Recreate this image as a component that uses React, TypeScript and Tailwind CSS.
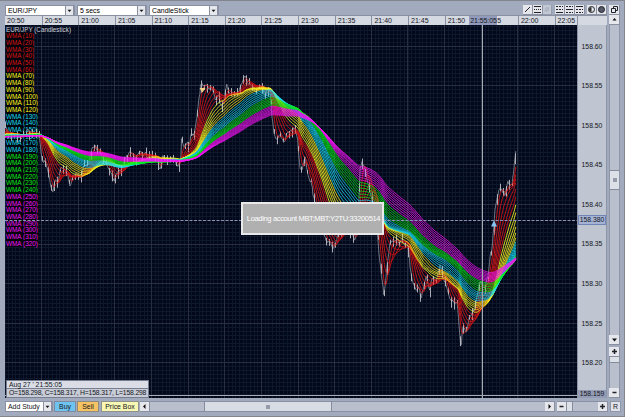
import type { ReactNode } from 'react';
import clsx from 'clsx';

type Point = [number, number];

const BAR = 0.611;
const WARMUP = 340;
const LEFT = 5;
const RIGHT = 517;

// close price in plot coordinates, one entry per swing
const swings: Point[] = [
  [-200, 142], [-120, 139], [-60, 138], [-20, 137], [-5, 134], [5, 128], [8, 133], [12, 135], [18, 135], [22, 139],
  [26, 132], [32, 133], [38, 132], [40, 138], [42, 159], [46, 163], [48, 170], [51, 188], [53, 193], [55, 182],
  [58, 185], [61, 168], [65, 170], [68, 175], [70, 187], [73, 172], [77, 175], [80, 177], [84, 166], [88, 164],
  [90, 156], [92, 148], [95, 144], [98, 152], [101, 153], [105, 160], [108, 165], [112, 173], [115, 180], [118, 172],
  [122, 166], [126, 159], [130, 149], [132, 152], [136, 158], [140, 154], [145, 156], [150, 154], [155, 160],
  [160, 167], [163, 155], [168, 163], [172, 158], [176, 164], [179, 168], [181, 158], [181.5, 140], [184, 150],
  [187, 144], [190, 142], [191, 130], [194, 135], [197, 115], [199, 95], [201, 87], [204, 86], [208, 85],
  [212, 90], [215, 101], [218, 98], [222, 104], [225, 96], [227, 85], [230, 92], [235, 91], [240, 89], [243, 80],
  [245, 75], [248, 83], [252, 88], [257, 90], [261, 87], [265, 93], [270, 93], [272, 118], [274, 132], [276, 138],
  [280, 136], [284, 140], [288, 133], [292, 130], [295, 130], [298, 145], [300, 166], [302, 168], [305, 156],
  [307, 172], [310, 181], [314, 195], [318, 215], [322, 222], [326, 243], [330, 240], [333, 247], [338, 235],
  [345, 222], [352, 235], [355, 242], [358, 225], [360, 168], [362, 162], [365, 172], [370, 190], [374, 205],
  [377, 230], [379, 255], [381, 273], [384, 293], [387, 266], [390, 242], [395, 243], [400, 240], [405, 242],
  [409, 250], [410, 266], [413, 282], [416, 290], [419, 290], [421, 299], [424, 285], [426, 275], [430, 288],
  [433, 275], [436, 280], [440, 264], [443, 275], [447, 288], [450, 298], [454, 303], [457, 300], [459, 325],
  [461, 346], [463, 328], [466, 335], [469, 317], [473, 313], [478, 292], [480, 279], [483, 290], [488, 280],
  [490, 260], [492, 246], [494, 222], [495, 206], [498, 192], [502, 187], [505, 197], [508, 182], [512, 184],
  [515, 155], [517, 146],
];

function priceAt(x: number) {
  for (let i = 1; i < swings.length; i++) {
    if (x <= swings[i][0]) {
      const [x0, y0] = swings[i - 1];
      const [x1, y1] = swings[i];
      return y0 + ((y1 - y0) * (x - x0)) / (x1 - x0);
    }
  }
  return swings[swings.length - 1][1];
}

function noise(i: number) {
  const v = Math.sin(i * 127.1 + 11.7) * 43758.5453;
  return v - Math.floor(v) - 0.5;
}

const count = WARMUP + Math.floor((RIGHT - LEFT) / BAR);
const closes = Array.from(
  { length: count },
  (_, i) => priceAt(LEFT + (i - WARMUP) * BAR) + noise(i) + noise(Math.floor(i / 4) + 4000) * 6
);

function wma(period: number) {
  const weight = (period * (period + 1)) / 2;
  const out: string[] = [];
  for (let i = WARMUP; i < count; i++) {
    let sum = 0;
    for (let k = 0; k < period; k++) sum += closes[i - k] * (period - k);
    out.push(`${(LEFT + (i - WARMUP) * BAR).toFixed(1)},${(sum / weight).toFixed(1)}`);
  }
  return out.join(' ');
}

function colorFor(period: number) {
  if (period <= 60) return '#dc1414';
  if (period <= 120) return '#fff81c';
  if (period <= 180) return '#18dcee';
  if (period <= 240) return '#08ee18';
  return '#f414f4';
}

const averages = Array.from({ length: 32 }, (_, i) => {
  const period = (i + 1) * 10;
  return { period, color: colorFor(period), points: wma(period) };
});

const candles = closes
  .slice(WARMUP)
  .map((y, i) => {
    if (i % 5 !== 0) return '';
    const x = Math.round(LEFT + i * BAR) + 0.5;
    const up = 1 + Math.abs(noise(i + 900)) * 10;
    const down = 1 + Math.abs(noise(i + 2500)) * 13;
    return `M${x} ${(y - up).toFixed(1)}V${(y + down).toFixed(1)}`;
  })
  .join('');

const closeLine = closes.slice(WARMUP).map((y, i) => `${(LEFT + i * BAR).toFixed(1)},${y.toFixed(1)}`).join(' ');

const times = ['20:50', '20:55', '21:00', '21:05', '21:10', '21:15', '21:20', '21:25', '21:30', '21:35', '21:40', '21:45', '21:50', '21:55', '22:00', '22:05'];
const prices = ['158.60', '158.55', '158.50', '158.45', '158.40', '158.35', '158.30', '158.25', '158.20'];

const timeX = (i: number) => 4.8 + i * 36.65;
const priceY = (i: number) => 46 + i * 39.6;

function Chart() {
  return (
    <svg className="block h-[373px] w-[572px] shrink-0 bg-[#020719]" viewBox="5 25 572 373">
      <g stroke="#0e182c" strokeWidth="1" shapeRendering="crispEdges">
        {Array.from({ length: 156 }, (_, i) => (
          <path key={i} d={`M${5 + i * 3.665} 25V398`} />
        ))}
        {Array.from({ length: 94 }, (_, i) => (
          <path key={i} d={`M5 ${26.2 + i * 3.96}H577`} />
        ))}
      </g>
      <g stroke="#272f43" strokeWidth="1" shapeRendering="crispEdges">
        {times.map((t, i) => (
          <path key={t} d={`M${timeX(i)} 25V398`} />
        ))}
        {prices.map((p, i) => (
          <path key={p} d={`M5 ${priceY(i)}H577`} />
        ))}
      </g>

      <g fontFamily="Liberation Sans, Arial, sans-serif" fontSize="6.8">
        <text x="6" y="31.5" fill="#d0d3dc" textLength="65" lengthAdjust="spacingAndGlyphs">EUR/JPY (Candlestick)</text>
        {averages.map(({ period, color }, i) => (
          <g key={period}>
            <rect x="6" y={32.6 + i * 6.69} width={period < 100 ? 28 : 32} height="6.7" fill="#02040c" />
            <text
              x="6"
              y={38.3 + i * 6.69}
              fill={color}
              textLength={period < 100 ? 28 : 32}
              lengthAdjust="spacingAndGlyphs"
            >
              {`WMA (${period})`}
            </text>
          </g>
        ))}
      </g>

      <path d={candles} stroke="#b4b6bd" strokeWidth="0.9" />
      <polyline points={closeLine} fill="none" stroke="#b9bbc3" strokeWidth="0.6" />
      <g fill="none" strokeWidth="0.85">
        {averages.map(({ period, color, points }) => (
          <polyline key={period} points={points} stroke={color} />
        ))}
      </g>
      <path d={candles} stroke="#d0d0d4" strokeWidth="0.8" opacity="0.25" />
      <path d="M199.5 88H205.5L202.5 92.5Z" fill="#f3d284" />
      <path d="M491 226.5H497L494 220.5Z" fill="#83c6f4" />

      <path d="M5 220.5H577" stroke="#8b91b4" strokeDasharray="3 1.5" />
      <path d="M482.5 25V398M5 395.5H577" stroke="#a9abb4" />
    </svg>
  );
}

function IconButton({ children, className }: { children: ReactNode; className?: string }) {
  return (
    <span
      className={clsx(
        'flex h-[10px] shrink-0 items-center justify-center border-r border-b border-[#8b90a1] bg-[#e5e7ed]',
        className ?? 'w-[10px]'
      )}
    >
      <svg className="h-[9px] w-[9px]" viewBox="0 0 9 9" fill="none" stroke="#20222a">
        {children}
      </svg>
    </span>
  );
}

const arrows = {
  up: 'M2.5 5.5H6.5L4.5 3Z',
  down: 'M2 3.5H7L4.5 6.5Z',
  left: 'M5.5 2V7L3 4.5Z',
  right: 'M3.5 2V7L6 4.5Z',
};

function Arrow({ dir, className }: { dir: keyof typeof arrows; className?: string }) {
  return (
    <IconButton className={className}>
      <path d={arrows[dir]} fill="#111" stroke="none" />
    </IconButton>
  );
}

function Select({ label }: { label: string }) {
  return (
    <div className="flex h-[11px] w-[70px] border border-[#8a90a3] bg-white">
      <span className="flex-1 pl-[2px] text-[6.9px] leading-[9px]">{label}</span>
      <Arrow dir="down" className="w-[9px] border-l" />
    </div>
  );
}

function Toolbar() {
  return (
    <div className="flex h-[12px] shrink-0 items-center pr-[4px] pl-[5px]">
      <div className="flex gap-[2px]">
        <Select label="EUR/JPY" />
        <Select label="5 secs" />
        <Select label="CandleStick" />
      </div>
      <div className="ml-auto flex gap-[2px]">
        <div className="flex">
          <IconButton><path d="M2 7L7 2" /></IconButton>
          <IconButton><path d="M1 1.5H8M1 7.5H8" /><path d="M1 4.5H8" strokeDasharray="1 1" /></IconButton>
          <IconButton className="w-[9px] opacity-50"><g stroke="#aab"><circle cx="4.5" cy="4.5" r="2" /><path d="M2 7L7 2" /></g></IconButton>
        </div>
        <div className="ml-[1px] flex">
          <IconButton><path d="M1 7.5H8" /><path d="M1 1.5H8M1 4.5H8" strokeDasharray="2 1" /></IconButton>
          <IconButton><path d="M1 4.5H8" /><path d="M1 1.5H8M1 7.5H8" strokeDasharray="2 1" /></IconButton>
          <IconButton><path d="M1 1.5H8" /><path d="M1 4.5H8M1 7.5H8" strokeDasharray="2 1" /></IconButton>
        </div>
        <div className="flex">
          <IconButton><circle cx="4.5" cy="4.5" r="3" /><path d="M4.5 2A2.5 2.5 0 0 0 4.5 7Z" fill="#333" stroke="none" /></IconButton>
          <IconButton><circle cx="4.5" cy="4.5" r="3" fill="#555866" /></IconButton>
        </div>
        <IconButton className="w-[11px]"><path d="M3.5 1.5H7.5V5.5H3.5Z" /><path d="M1.5 3.5H5.5V7.5H1.5Z" fill="#e5e7ed" /></IconButton>
      </div>
    </div>
  );
}

function TimeAxis() {
  return (
    <div className="relative flex h-[9px] w-[602px] overflow-hidden bg-[#d5d9e2] text-[7px] leading-[9px] text-[#15161c]">
      {times.map((t, i) =>
        t === '21:55' ? (
          <span key={t} className="-ml-[12px] flex w-[48.65px] shrink-0">
            <span className="w-[28px] bg-[#929bbb] pl-[1px] tracking-[-0.1px]">21:55:05</span>5
          </span>
        ) : (
          <span
            key={t}
            className={clsx('w-[36.65px] shrink-0 pl-[2px]', i > 0 && 'border-l border-[#8990a2]')}
          >
            {t}
          </span>
        )
      )}
      <span className="absolute top-0 left-[572px] h-full w-[31px] border-l border-[#8990a2] bg-[#d5d9e2]" />
    </div>
  );
}

function PriceAxis() {
  return (
    <div className="relative w-[30px] border-l border-r border-[#8c94a8] bg-[#bfc5d1] pt-[1.5px] text-center text-[6.8px] text-[#15161c]">
      {prices.map((p) => (
        <div key={p} className="h-[39.6px] leading-[39.6px]">{p}</div>
      ))}
      <div className="absolute top-[190px] left-0 h-[10px] w-full border border-[#7184b3] bg-[#a5b4d5] leading-[8px]">158.380</div>
      <div className="absolute bottom-0 left-0 h-[8px] w-full bg-[#949cb5] leading-[8px]">158.159</div>
    </div>
  );
}

function Grip() {
  return <span className="h-[4px] w-[4px] bg-[#969ba9]" />;
}

function VerticalScroll() {
  return (
    <div className="ml-[2px] flex w-[11px] flex-col">
      <Arrow dir="up" className="w-[11px]" />
      <div className="flex flex-1 flex-col border-x border-[#8f95a7] bg-[#b9bfcc] pt-[145px]">
        <div className="flex h-[20px] items-center justify-center border-y border-[#858b9d] bg-[#dce0e7]"><Grip /></div>
      </div>
      <Arrow dir="down" className="w-[11px]" />
      <IconButton className="mt-[2px] w-[11px]"><path d="M2 4.5H7M4.5 2V7" strokeWidth="1.5" /></IconButton>
      <div className="h-[31px] border-x border-[#8f95a7] bg-[#b9bfcc]">
        <div className="h-[6px] border-b border-[#858b9d] bg-[#dce0e7]" />
      </div>
      <IconButton className="w-[11px]"><path d="M2.5 4.5H6.5" strokeWidth="1.5" /></IconButton>
    </div>
  );
}

function BottomBar() {
  return (
    <div className="mt-[3px] flex h-[11px] items-stretch pl-[5px] text-[6.9px] leading-[9px] text-[#15161c]">
      <div className="flex w-[48px] border border-[#8a90a3] bg-white">
        <span className="flex-1 pl-[2px] whitespace-nowrap">Add Study</span>
        <Arrow dir="down" className="h-[9px] w-[9px] border-l" />
      </div>
      <span className="ml-px w-[22px] border border-[#7d8aa0] bg-[#6ec3f1] text-center">Buy</span>
      <span className="ml-[1px] w-[22px] border border-[#8f8a80] bg-[#f6c263] text-center">Sell</span>
      <span className="ml-[2px] w-[38px] border border-[#90918c] bg-[#f8f7b3] text-center whitespace-nowrap">Price Box</span>
      <div className="ml-[1px] flex w-[415px] border-y border-[#8a90a3] bg-[#b9bfcc]">
        <Arrow dir="left" />
        <div className="ml-[54px] flex w-[128px] items-center justify-center border-x border-[#858b9d] bg-[#d8dce4]"><Grip /></div>
        <span className="flex-1" />
        <Arrow dir="right" />
      </div>
      <div className="ml-[2px] flex w-[51px] border-y border-[#8a90a3] bg-[#b9bfcc]">
        <IconButton><path d="M2.5 4.5H6.5" strokeWidth="1.5" /></IconButton>
        <span className="w-[6px] border-r border-[#858b9d] bg-[#dce0e7]" />
        <span className="flex-1" />
        <IconButton><path d="M2 4.5H7M4.5 2V7" strokeWidth="1.5" /></IconButton>
      </div>
      <span className="ml-[2px] w-[11px] border border-[#9097a8] bg-[#dfe2e9] text-center">R</span>
    </div>
  );
}

export default function App() {
  return (
    <div className="flex h-[417px] w-[625px] flex-col overflow-hidden border-t border-r border-b border-[#82858e] bg-[#a2aabd] pt-[3px] font-['Liberation_Sans',Arial,sans-serif] text-black">
      <Toolbar />
      <div className="-mt-px flex h-[383px] shrink-0 pl-[5px]">
        <div className="flex w-[602px] flex-col border-t border-[#8990a2]">
          <TimeAxis />
          <div className="flex h-[373px]">
            <div className="relative">
              <Chart />
              <div className="absolute top-[177px] left-[236px] flex h-[33px] w-[143px] items-center justify-center border-2 border-[#e9e9e9] bg-[#b0b0b0] pl-[2px] text-[7.5px] tracking-[-0.34px] whitespace-nowrap text-white">
                Loading account MBT;MBT;Y2TU:33200514
              </div>
              <div className="absolute top-[355px] left-[1px] w-[143px] border border-[#777d8e] bg-[#c8ccd7] text-[6.8px] whitespace-nowrap text-[#15161c]">
                <div className="h-[8px] border-b border-[#777d8e] bg-[#dadde5] pl-[2px] leading-[8px]">Aug 27 ' 21:55:05</div>
                <div className="h-[8px] pl-[2px] leading-[8px] tracking-[-0.17px]">O=158.298, C=158.317, H=158.317, L=158.298</div>
              </div>
            </div>
            <PriceAxis />
          </div>
        </div>
        <VerticalScroll />
      </div>
      <BottomBar />
    </div>
  );
}
